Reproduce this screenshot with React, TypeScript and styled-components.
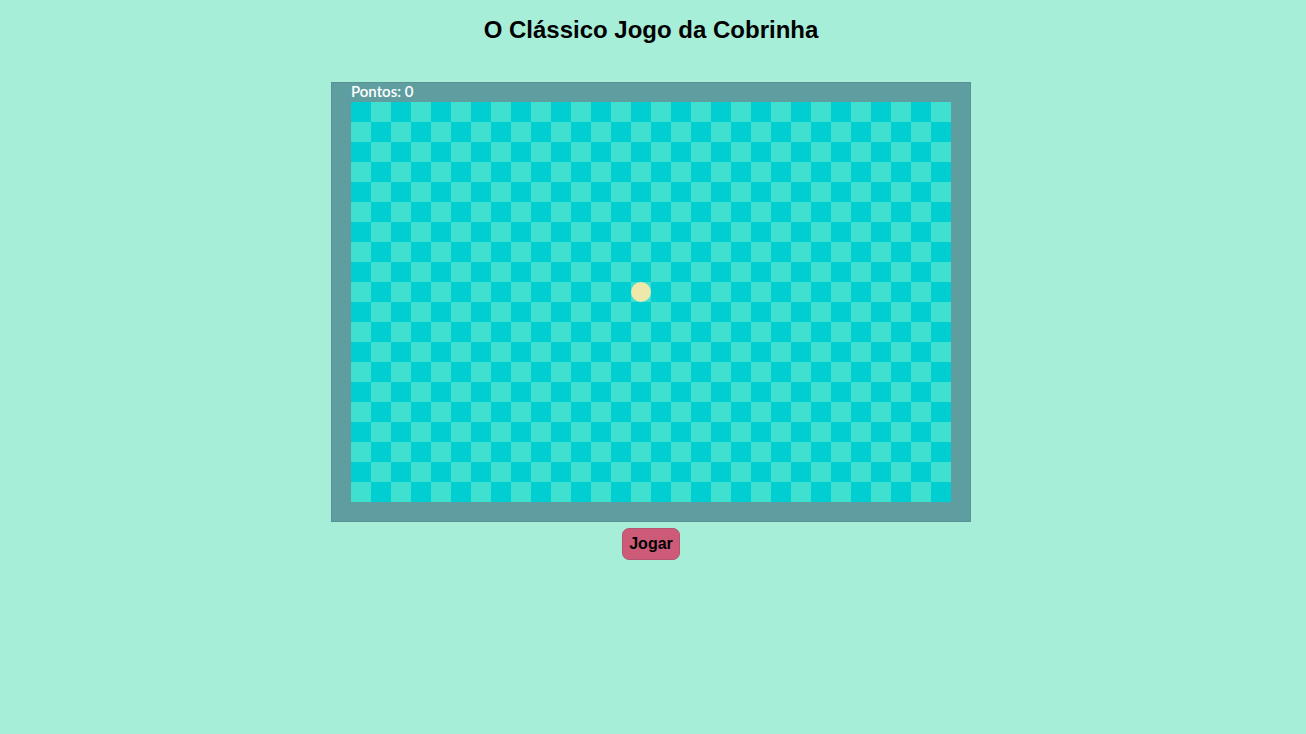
import styled, { createGlobalStyle } from 'styled-components'

const COLS = 30
const ROWS = 20
const CELL = 20

const food = { x: 14, y: 9 }

const GlobalStyle = createGlobalStyle`
  html, body {
    margin: 0;
    padding: 0;
    background: #a6eed8;
    font-family: "Liberation Sans", Arial, sans-serif;
  }
`

export default function App(): JSX.Element {
  return (
    <>
      <GlobalStyle />
      <Page>
        <Title>O Clássico Jogo da Cobrinha</Title>
        <Frame>
          <Score>Pontos: 0</Score>
          <Board>
            <Food style={{ left: food.x * CELL, top: food.y * CELL }} />
          </Board>
        </Frame>
        <PlayButton>Jogar</PlayButton>
      </Page>
    </>
  )
}

const Page = styled.div`
  display: flex;
  flex-direction: column;
  align-items: center;
  padding: 16px 4px 0 0;
  min-height: 734px;
  box-sizing: border-box;
`

const Title = styled.h1`
  margin: 0;
  font-size: 24px;
  font-weight: 700;
  line-height: 28px;
  color: #000;
`

const Frame = styled.div`
  margin-top: 38px;
  width: 640px;
  height: 440px;
  box-sizing: border-box;
  padding: 0 19px 19px;
  background: #5f9ea0;
  border: 1px solid #5a9196;
  display: flex;
  flex-direction: column;
`

const Score = styled.div`
  height: 19px;
  font-family: Lato, "Open Sans", sans-serif;
  font-size: 15px;
  font-weight: 600;
  line-height: 16px;
  color: #fff;
`

const Board = styled.div`
  position: relative;
  width: ${COLS * CELL}px;
  height: ${ROWS * CELL}px;
  background: conic-gradient(#40e0d0 25%, #00ced1 0 50%, #40e0d0 0 75%, #00ced1 0);
  background-size: ${CELL * 2}px ${CELL * 2}px;
`

const Food = styled.div`
  position: absolute;
  width: ${CELL}px;
  height: ${CELL}px;
  border-radius: 50%;
  background: #eee8aa;
`

const PlayButton = styled.button`
  margin-top: 6px;
  height: 32px;
  padding: 0 6px;
  font-family: "Liberation Sans", Arial, sans-serif;
  font-size: 16px;
  font-weight: 700;
  color: #000;
  background: #cd5b78;
  border: 1px solid #b55570;
  border-radius: 7px;
  cursor: pointer;
`
